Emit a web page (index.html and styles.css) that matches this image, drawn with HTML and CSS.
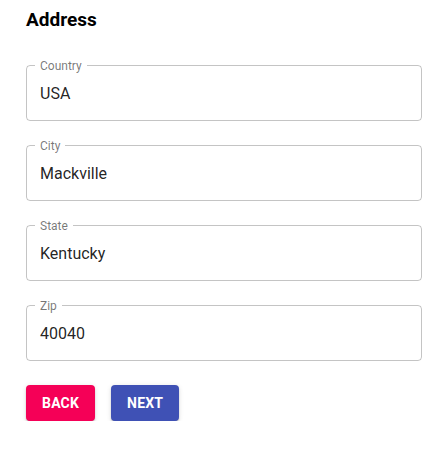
FILE: index.html
```html
<!DOCTYPE html>
<html lang="en">
<head>
<meta charset="utf-8">
<title>Address</title>
<link rel="stylesheet" href="styles.css">
</head>
<body>
<main class="page">
  <h1 class="title">Address</h1>
  <div class="fields">
    <div class="field">
      <span class="field-label">Country</span>
      <div class="field-value">USA</div>
    </div>
    <div class="field">
      <span class="field-label">City</span>
      <div class="field-value">Mackville</div>
    </div>
    <div class="field">
      <span class="field-label">State</span>
      <div class="field-value">Kentucky</div>
    </div>
    <div class="field">
      <span class="field-label">Zip</span>
      <div class="field-value">40040</div>
    </div>
  </div>
  <div class="actions">
    <button class="btn btn-back" type="button">Back</button>
    <button class="btn btn-next" type="button">Next</button>
  </div>
</main>
</body>
</html>
```

FILE: styles.css
```css
* { box-sizing: border-box; }
html, body { margin: 0; background: #fff; }
body {
  font-family: Roboto, "Noto Sans", sans-serif;
  color: rgba(0, 0, 0, 0.87);
}
.page {
  padding: 8px 22px 0 26px;
}
.title {
  margin: 0;
  font-size: 19px;
  font-weight: 700;
  line-height: 24px;
  color: #000;
}
.fields {
  margin-top: 33px;
  display: flex;
  flex-direction: column;
  gap: 24px;
}
.field {
  position: relative;
  height: 56px;
  border: 1px solid rgba(0, 0, 0, 0.23);
  border-radius: 4px;
}
.field-label {
  position: absolute;
  top: -7px;
  left: 8px;
  padding: 0 5px;
  background: #fff;
  font-size: 12px;
  line-height: 14px;
  color: rgba(0, 0, 0, 0.54);
}
.field-value {
  padding: 17.5px 13px;
  font-size: 16px;
  line-height: 19px;
  color: rgba(0, 0, 0, 0.87);
}
.actions {
  margin-top: 24px;
  display: flex;
  gap: 16px;
}
.btn {
  height: 36px;
  padding: 0 16px;
  border: 0;
  border-radius: 4px;
  font-family: Roboto, "Noto Sans", sans-serif;
  font-size: 14px;
  font-weight: 700;
  letter-spacing: 0.2px;
  text-transform: uppercase;
  color: #fff;
  box-shadow: 0 3px 1px -2px rgba(0,0,0,0.2), 0 2px 2px 0 rgba(0,0,0,0.14), 0 1px 5px 0 rgba(0,0,0,0.12);
}
.btn-back { background: #f50057; }
.btn-next { background: #3f51b5; }
```
